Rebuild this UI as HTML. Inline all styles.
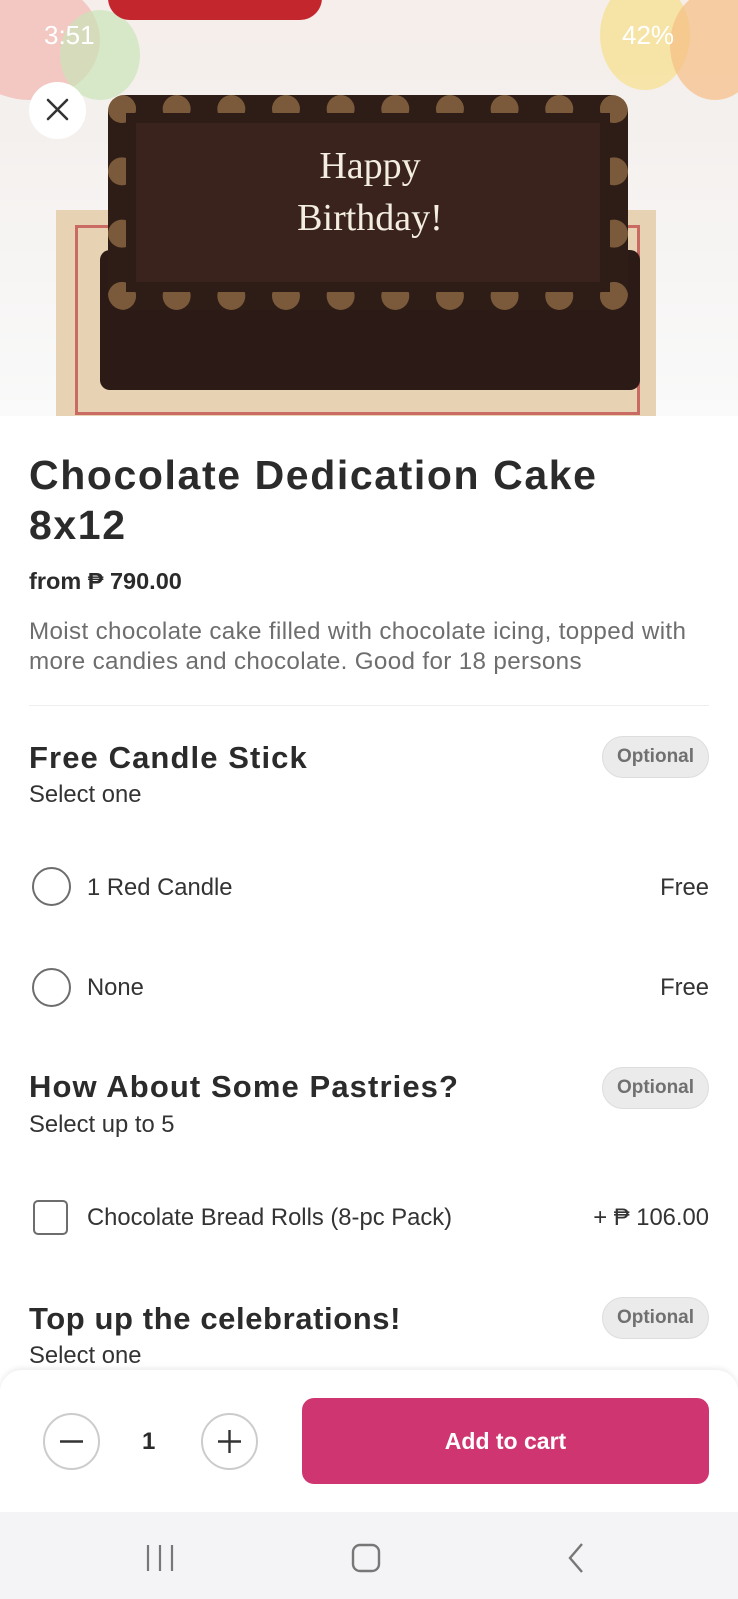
<!DOCTYPE html>
<html><head><meta charset="utf-8"><style>
*{margin:0;padding:0;box-sizing:border-box}
body{width:738px;height:1599px;position:relative;overflow:hidden;background:#fff;font-family:"Liberation Sans",sans-serif;color:#2b2b2b}
.a{position:absolute;white-space:nowrap}
.h{font-weight:bold;letter-spacing:1.1px}
.pill{position:absolute;left:602px;width:107px;height:42px;border-radius:21px;background:#ebebeb;border:1px solid #ddd;color:#707070;font-weight:bold;font-size:19px;text-align:center;line-height:40px}
.radio{position:absolute;left:32px;width:39px;height:39px;border:2.5px solid #6d6d6d;border-radius:50%}
.t{font-size:23.8px;color:#333}
</style></head><body>
<div class="a" style="left:0;top:0;width:738px;height:416px;background:linear-gradient(#f6eeea,#f4f0ee 30%,#fafafa);overflow:hidden">
 <div class="a" style="left:-40px;top:-20px;width:140px;height:120px;border-radius:50%;background:#f2b6b0;opacity:.7"></div>
 <div class="a" style="left:60px;top:10px;width:80px;height:90px;border-radius:50%;background:#c9e6b8;opacity:.7"></div>
 <div class="a" style="left:600px;top:-20px;width:90px;height:110px;border-radius:50%;background:#f7e08a;opacity:.7"></div>
 <div class="a" style="left:670px;top:-10px;width:90px;height:110px;border-radius:50%;background:#f6bd84;opacity:.7"></div>
 <div class="a" style="left:108px;top:-30px;width:214px;height:50px;border-radius:0 0 22px 22px;background:#c4262e"></div>
 <div class="a" style="left:56px;top:210px;width:600px;height:206px;background:#e7d2b4"></div>
 <div class="a" style="left:75px;top:225px;width:565px;height:190px;border:3px solid #c96a63"></div>
 <div class="a" style="left:100px;top:250px;width:540px;height:140px;border-radius:10px;background:#2b1a15"></div>
 <div class="a" style="left:108px;top:95px;width:520px;height:215px;border-radius:16px;background:#2e1c16;border:28px dotted #7a5a3a;outline:10px solid #2e1c16;outline-offset:-28px"></div>
 <div class="a" style="left:136px;top:123px;width:464px;height:159px;background:#3a231c"></div>
 <div class="a" style="left:240px;top:140px;font-family:'Liberation Serif',serif;font-size:38px;color:#f3eee0;line-height:52px;text-align:center;width:260px;white-space:normal">Happy<br>Birthday!</div>
 <div class="a" style="left:44px;top:20px;font-size:26px;color:#fff">3:51</div>
 <div class="a" style="left:622px;top:20px;font-size:26px;color:#fff">42%</div>
 <div class="a" style="left:29px;top:82px;width:57px;height:57px;border-radius:50%;background:#fff"></div>
 <svg class="a" style="left:29px;top:82px" width="57" height="57"><path d="M19 18L38 37M38 18L19 37" stroke="#333" stroke-width="2.6" stroke-linecap="round"/></svg>
</div>
<div class="a h" style="left:29px;top:450px;font-size:41px;line-height:50px;letter-spacing:1.6px">Chocolate Dedication Cake<br>8x12</div>
<div class="a" style="left:29px;top:568px;font-size:23.5px;font-weight:bold">from ₱ 790.00</div>
<div class="a" style="left:29px;top:617px;font-size:24.2px;line-height:30px;color:#6e6e6e;letter-spacing:0.35px">Moist chocolate cake filled with chocolate icing, topped with<br>more candies and chocolate. Good for 18 persons</div>
<div class="a" style="left:29px;top:705px;width:680px;height:1px;background:#eee"></div>

<div class="a h" style="left:29px;top:740px;font-size:31px">Free Candle Stick</div>
<div class="pill" style="top:736px">Optional</div>
<div class="a t" style="left:29px;top:781px">Select one</div>
<div class="radio" style="top:867px"></div>
<div class="a t" style="left:87px;top:874px">1 Red Candle</div>
<div class="a t" style="right:29px;top:874px">Free</div>
<div class="radio" style="top:968px"></div>
<div class="a t" style="left:87px;top:974px">None</div>
<div class="a t" style="right:29px;top:974px">Free</div>

<div class="a h" style="left:29px;top:1069px;font-size:31px">How About Some Pastries?</div>
<div class="pill" style="top:1067px">Optional</div>
<div class="a t" style="left:29px;top:1111px">Select up to 5</div>
<div class="a" style="left:33px;top:1200px;width:35px;height:35px;border:2.5px solid #6d6d6d;border-radius:5px"></div>
<div class="a t" style="left:87px;top:1204px">Chocolate Bread Rolls (8-pc Pack)</div>
<div class="a t" style="right:29px;top:1204px">+ ₱ 106.00</div>

<div class="a h" style="left:29px;top:1301px;font-size:31px;letter-spacing:0.6px">Top up the celebrations!</div>
<div class="pill" style="top:1297px">Optional</div>
<div class="a t" style="left:29px;top:1342px">Select one</div>

<div class="a" style="left:0;top:1370px;width:738px;height:150px;background:#fff;border-radius:22px 22px 0 0;box-shadow:0 -2px 6px rgba(0,0,0,.08)"></div>
<div class="a" style="left:43px;top:1413px;width:57px;height:57px;border:2px solid #ccc;border-radius:50%"></div>
<svg class="a" style="left:43px;top:1413px" width="57" height="57"><path d="M17 28.5H40" stroke="#333" stroke-width="2.4"/></svg>
<div class="a" style="left:142px;top:1428px;font-size:24px;font-weight:bold">1</div>
<div class="a" style="left:201px;top:1413px;width:57px;height:57px;border:2px solid #ccc;border-radius:50%"></div>
<svg class="a" style="left:201px;top:1413px" width="57" height="57"><path d="M17 28.5H40M28.5 17V40" stroke="#333" stroke-width="2.4"/></svg>
<div class="a" style="left:302px;top:1398px;width:407px;height:86px;border-radius:12px;background:#cf3571;color:#fff;font-size:23px;font-weight:bold;text-align:center;line-height:86px">Add to cart</div>

<div class="a" style="left:0;top:1512px;width:738px;height:87px;background:#f4f4f6"></div>
<svg class="a" style="left:0;top:1512px" width="738" height="87">
<path d="M148 33V59M160 33V59M172 33V59" stroke="#777" stroke-width="2.2"/>
<rect x="353" y="33" width="26" height="26" rx="7" fill="none" stroke="#777" stroke-width="2.4"/>
<path d="M582 32L570 46L582 60" fill="none" stroke="#777" stroke-width="2.4"/>
</svg>
</body></html>
